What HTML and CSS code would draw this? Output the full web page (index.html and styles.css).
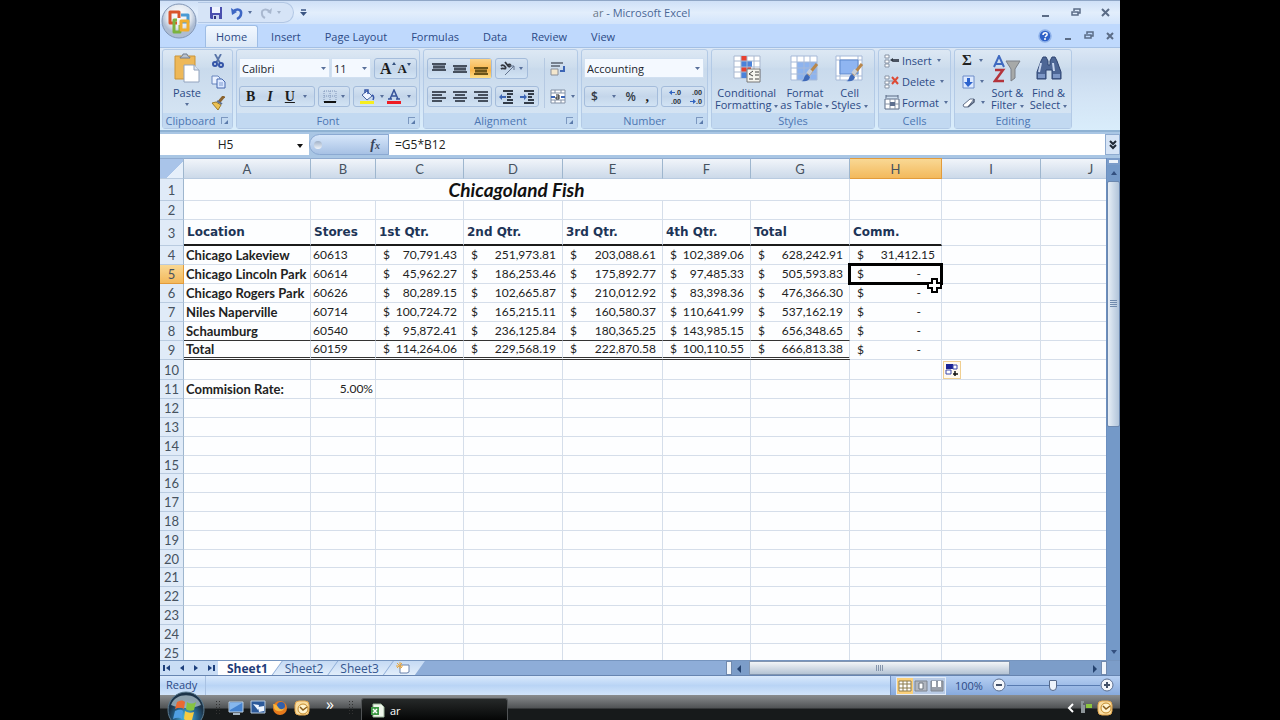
FILE: index.html
```html
<!DOCTYPE html>
<html lang="en">
<head>
    <meta charset="UTF-8">
    <meta name="viewport" content="width=device-width, initial-scale=1.0">
    <title>ar - Microsoft Excel</title>
    <link rel="stylesheet" href="styles.css">
</head>
<body>
<div class="app">
    <header class="titlebar">
        <button class="office" aria-label="Office Button">
            <svg width="36" height="36" viewBox="0 0 36 36">
                <defs><radialGradient id="orb" cx=".5" cy=".35"><stop offset="0" stop-color="#fff"/><stop offset=".7" stop-color="#e3e9f1"/><stop offset="1" stop-color="#aebdd3"/></radialGradient></defs>
                <circle cx="18" cy="18" r="17" fill="url(#orb)" stroke="#8296b5"/>
                <g fill="none" stroke-width="3" stroke-linejoin="round">
                    <path d="M16 20H9V9h9v6" stroke="#d9542b"/>
                    <path d="M20 12h7v7h-6" stroke="#4a9bd4"/>
                    <path d="M16 17h-3v12h6v-7" stroke="#7bb33e"/>
                    <path d="M20 18h7v9h-7z" stroke="#f0ae2e"/>
                </g>
            </svg>
        </button>
        <div class="quick">
            <button aria-label="Save"><svg width="14" height="14" viewBox="0 0 14 14"><path d="M1 1h12v12H2l-1-1z" fill="#4a4fae"/><path d="M3 1h8v6H3z" fill="#eef3ff"/><path d="M4 9h6v4H4z" fill="#c9d5ef"/><path d="M5 10h2v3H5z" fill="#30357c"/></svg></button>
            <button aria-label="Undo"><svg width="14" height="14" viewBox="0 0 14 14"><path d="M3 6c3-4 9-3 8 2 0 2-2 4-4 5" fill="none" stroke="#3d66c4" stroke-width="2.5"/><path d="M1 2l1 7 5-3z" fill="#3d66c4"/></svg><i class="caret"></i></button>
            <button aria-label="Redo"><svg width="14" height="14" viewBox="0 0 14 14"><path d="M11 6C8 2 2 3 3 8c0 2 1 3 3 4" fill="none" stroke="#a9b8cf" stroke-width="2"/><path d="M13 2l-1 6-4-2z" fill="#a9b8cf"/></svg><i class="caret pale"></i></button>
        </div>
        <button class="more" aria-label="Customize Quick Access Toolbar"><svg width="7" height="8" viewBox="0 0 7 8"><path d="M1 1h5" stroke="#3b5684" stroke-width="1.5"/><path d="M0 3h7L3.500 7z" fill="#3b5684"/></svg></button>
        <h1><span>ar</span> - Microsoft Excel</h1>
        <div class="winbtns">
            <button aria-label="Minimize"><svg width="10" height="10"><path d="M1 8h7" stroke="#5b6c86" stroke-width="2"/></svg></button>
            <button aria-label="Restore"><svg width="10" height="10"><path d="M3 3V1h6v4H7M1 4h6v3H1z" fill="none" stroke="#5b6c86" stroke-width="1.500"/></svg></button>
            <button aria-label="Close"><svg width="10" height="10"><path d="M1 1l7 7M8 1L1 8" stroke="#5b6c86" stroke-width="2"/></svg></button>
        </div>
    </header>

    <nav class="tabs">
        <button class="tab home">Home</button>
        <button class="tab">Insert</button>
        <button class="tab">Page Layout</button>
        <button class="tab">Formulas</button>
        <button class="tab">Data</button>
        <button class="tab">Review</button>
        <button class="tab">View</button>
        <div class="docbtns">
            <button aria-label="Help"><svg width="14" height="14" viewBox="0 0 14 14"><circle cx="7" cy="7" r="6" fill="#2f62c8" stroke="#8fb2ea" stroke-width="1.500"/><path d="M5 6c0-3 5-3 4 0L7 8M7 9v2" fill="none" stroke="#fff" stroke-width="1.500"/></svg></button>
            <button aria-label="Minimize Workbook"><svg width="10" height="10"><path d="M2 8h6" stroke="#5b6c86" stroke-width="2"/></svg></button>
            <button aria-label="Restore Workbook"><svg width="10" height="10"><path d="M3 3V1h6v4H7M1 4h6v3H1z" fill="none" stroke="#5b6c86" stroke-width="1.500"/></svg></button>
            <button aria-label="Close Workbook"><svg width="10" height="10"><path d="M2 2l6 6M8 2L2 8" stroke="#5b6c86" stroke-width="2"/></svg></button>
        </div>
    </nav>

    <section class="ribbon">
        <div class="group clipboard">
            <div class="tools">
                <button class="big"><svg width="28" height="30" viewBox="0 0 28 30"><path d="M2 3h20v23H2z" fill="#eeb858" stroke="#c99338"/><path d="M7 5c0-2 3-1 3-4h4c0 3 3 2 3 4z" fill="#b9c2cf" stroke="#717d8e"/><path d="M11 12h10l5 5v12H11z" fill="#fff" stroke="#93a4be"/><path d="M21 12v5h5" fill="#dbe5f3" stroke="#93a4be"/></svg>Paste<i class="caret"></i></button>
                <div class="stack">
                    <button aria-label="Cut"><svg width="14" height="14" viewBox="0 0 14 14"><path d="M4 0l5 9M10 0L5 9" stroke="#5874a8" stroke-width="1.800"/><g fill="none" stroke="#3555a8" stroke-width="2"><circle cx="4" cy="10" r="2"/><circle cx="10" cy="11" r="2"/></g></svg></button>
                    <button aria-label="Copy"><svg width="15" height="14" viewBox="0 0 15 14"><path d="M1 1h6l2 2v6H1z" fill="#e9f1ff" stroke="#6784bd"/><path d="M6 4h5l3 3v6H6z" fill="#dbe8ff" stroke="#4566ad"/><path d="M8 8h4M8 10h4" stroke="#7f9bd0"/></svg></button>
                    <button aria-label="Format Painter"><svg width="14" height="14" viewBox="0 0 14 14"><path d="M13 0L8 6" stroke="#8b6430" stroke-width="3"/><path d="M1 7l4-1 5 3-3 5z" fill="#ecc152" stroke="#9a7a2c"/><path d="M6 5l5 3" stroke="#5d6f8e" stroke-width="2"/></svg></button>
                </div>
            </div>
            <div class="caption">Clipboard<button class="launch" aria-label="Clipboard options"></button></div>
        </div>

        <div class="group font">
            <div class="tools lines">
                <div class="line">
                    <div class="combos">
                        <select class="face" aria-label="Font"><option>Calibri</option></select>
                        <select class="size" aria-label="Font size"><option>11</option></select>
                    </div>
                    <div class="set grow"><button class="serif up" aria-label="Grow font">A<i class="tri"></i></button><button class="serif down" aria-label="Shrink font">A<i class="tri flip"></i></button></div>
                </div>
                <div class="line">
                    <div class="set biu"><button class="serif">B</button><button class="serif"><em>I</em></button><button class="serif"><u>U</u></button><i class="caret"></i></div>
                    <div class="set"><button aria-label="Borders"><svg width="14" height="14" viewBox="0 0 14 14"><path d="M1 1h12v11M1 1v11M7 1v10M1 6h12" fill="none" stroke="#8096ba" stroke-dasharray="1 1"/><path d="M1 12h12" stroke="#111" stroke-width="2"/></svg></button><i class="caret"></i></div>
                    <div class="set grow">
                        <button aria-label="Fill color"><svg width="16" height="16" viewBox="0 0 16 16"><path d="M3 6l5-4 5 5-5 4z" fill="#eef4ff" stroke="#46639f"/><path d="M6 4V1h3v4M13 6c2 1 2 3 1 5" fill="none" stroke="#3555a8" stroke-width="1.500"/><path d="M1 12h14v3H1z" fill="#f7ee1f"/></svg></button><i class="caret"></i>
                        <button aria-label="Font color"><svg width="16" height="16" viewBox="0 0 16 16"><path d="M4 10l4-9 4 9M5 7h6M2 10h4M10 10h4" fill="none" stroke="#36539a" stroke-width="1.500"/><path d="M1 12h14v3H1z" fill="#ee1c24"/></svg></button><i class="caret"></i>
                    </div>
                </div>
            </div>
            <div class="caption">Font<button class="launch" aria-label="Font options"></button></div>
        </div>

        <div class="group alignment">
            <div class="tools">
                <div class="lines">
                    <div class="line">
                        <div class="set bars">
                            <button aria-label="Top align"><svg width="14" height="14"><path d="M0 1h14v2H0zM1 4h12v2H1zM0 7h14v2H0z" fill="#46505e"/><path d="M1 3h12v1H1zM1 6h12v1H1z" fill="#7f8b9b"/></svg></button>
                            <button aria-label="Middle align"><svg width="14" height="14"><path d="M0 3h14v2H0zM1 6h12v2H1zM0 9h14v2H0z" fill="#46505e"/><path d="M1 5h12v1H1zM1 8h12v1H1z" fill="#7f8b9b"/></svg></button>
                            <button class="on" aria-label="Bottom align"><svg width="14" height="14"><path d="M0 5h14v2H0zM1 8h12v2H1zM0 11h14v2H0z" fill="#6b5318"/><path d="M1 7h12v1H1zM1 10h12v1H1z" fill="#a58138"/></svg></button>
                        </div>
                        <div class="set"><button aria-label="Orientation"><svg width="15" height="15" viewBox="0 0 15 15"><path d="M1 5c2-2 4 0 5 2M1 8c2-2 3 1 5-1M5 1l4 5M9 6c3-1 1-4-1-2" fill="none" stroke="#33373f" stroke-width="1.800"/><path d="M5 14l9-9M14 5h-4M14 5v4" fill="none" stroke="#65758f"/></svg></button><i class="caret"></i></div>
                    </div>
                    <div class="line">
                        <div class="set bars">
                            <button aria-label="Align left"><svg width="14" height="14"><path d="M0 2h14M0 5h10M0 8h14M0 11h10" stroke="#46505e" stroke-width="2"/></svg></button>
                            <button aria-label="Center"><svg width="14" height="14"><path d="M0 2h14M2 5h10M0 8h14M2 11h10" stroke="#46505e" stroke-width="2"/></svg></button>
                            <button aria-label="Align right"><svg width="14" height="14"><path d="M0 2h14M4 5h10M0 8h14M4 11h10" stroke="#46505e" stroke-width="2"/></svg></button>
                        </div>
                        <div class="set bars">
                            <button aria-label="Decrease indent"><svg width="15" height="14"><path d="M4 1h10M8 4h6M8 7h4M8 10h6M4 13h10" stroke="#333c49" stroke-width="2"/><path d="M7 6H3V4L0 7l3 3V8h4z" fill="#3c65b5"/></svg></button>
                            <button aria-label="Increase indent"><svg width="15" height="14"><path d="M4 1h10M8 4h6M8 7h4M8 10h6M4 13h10" stroke="#333c49" stroke-width="2"/><path d="M0 6h4V4l3 3-3 3V8H0z" fill="#3c65b5"/></svg></button>
                        </div>
                    </div>
                </div>
                <div class="stack two">
                    <button aria-label="Wrap text"><svg width="16" height="16" viewBox="0 0 16 16"><path d="M1 2h12M1 5h9" stroke="#76808e" stroke-width="2"/><path d="M1 8h7v6H1z" fill="#f4e7cd" stroke="#8a8f99"/><path d="M10 10h4V5" fill="none" stroke="#3c65b5" stroke-width="2"/></svg></button>
                    <button aria-label="Merge and center"><svg width="16" height="16" viewBox="0 0 16 16"><path d="M1 1h14v13H1zM1 4h14M1 11h14M5 1v3M11 1v3M5 11v3M11 11v3" fill="#fff" stroke="#8290a5"/><path d="M1 8h4M11 8h4" stroke="#3c65b5" stroke-width="2"/><path d="M6 6h3v4H6V8h3" fill="none" stroke="#222"/></svg><i class="caret"></i></button>
                </div>
            </div>
            <div class="caption">Alignment<button class="launch" aria-label="Alignment options"></button></div>
        </div>

        <div class="group number">
            <div class="tools lines">
                <div class="line"><select class="format" aria-label="Number format"><option>Accounting</option></select></div>
                <div class="line">
                    <div class="set money"><button>$</button><i class="caret"></i><button>%</button><button class="serif">,</button></div>
                    <div class="set bars">
                        <button class="dec" aria-label="Increase decimal"><span><svg width="6" height="5"><path d="M6 2H3V0L0 2.500 3 5V3h3z" fill="#3264c0"/></svg>.0</span><span>.00</span></button>
                        <button class="dec" aria-label="Decrease decimal"><span>.00</span><span><svg width="6" height="5"><path d="M0 2h3V0l3 2.500L3 5V3H0z" fill="#3264c0"/></svg>.0</span></button>
                    </div>
                </div>
            </div>
            <div class="caption">Number<button class="launch" aria-label="Number options"></button></div>
        </div>

        <div class="group styles">
            <div class="tools">
                <button class="big"><svg width="28" height="28" viewBox="0 0 28 28"><path d="M1 1h26v22H1z" fill="#fff" stroke="#a9b8d0"/><path d="M8 1h6v5H8zM8 12h10v5H8z" fill="#e8402f"/><path d="M8 6h11v6H8zM8 17h6v6H8z" fill="#4b82da"/><path d="M1 6h26M1 12h26M1 17h26M8 1v22M14 1v22M21 1v22" stroke="#a9b8d0"/><path d="M14 14h13v13H14z" fill="#f5f5ef" stroke="#777"/><path d="M20 16l-4 3 4 2M22 17h4M22 20h4M16 24h4M22 24h4" fill="none" stroke="#444"/></svg><span>Conditional<br>Formatting<i class="caret"></i></span></button>
                <button class="big"><svg width="29" height="28" viewBox="0 0 29 28"><path d="M1 1h26v24H1z" fill="#fff"/><path d="M7 7h20v18H7z" fill="#8db3ee"/><path d="M1 1h26v24H1zM1 7h26M1 13h26M1 19h26M7 1v24M14 1v24M20 1v24" fill="none" stroke="#a6b9d8"/><path d="M27 9l-9 11" stroke="#b8874b" stroke-width="3"/><path d="M21 15l-3 4" stroke="#c9ced6" stroke-width="4"/><path d="M11 26c4 0 2-5 6-7l3 3c-1 4-4 5-9 4z" fill="#3f69b8"/></svg><span>Format<br>as Table<i class="caret"></i></span></button>
                <button class="big"><svg width="29" height="28" viewBox="0 0 29 28"><path d="M1 1h26v24H1z" fill="#fff" stroke="#a6b9d8"/><path d="M1 5h26M1 21h26M5 1v24M23 1v24" stroke="#a6b9d8"/><path d="M5 5h18v14H5z" fill="#8fb5f1" stroke="#5f89cd"/><path d="M27 9l-9 11" stroke="#b8874b" stroke-width="3"/><path d="M21 15l-3 4" stroke="#c9ced6" stroke-width="4"/><path d="M11 26c4 0 2-5 6-7l3 3c-1 4-4 5-9 4z" fill="#3f69b8"/></svg><span>Cell<br>Styles<i class="caret"></i></span></button>
            </div>
            <div class="caption">Styles</div>
        </div>

        <div class="group cells">
            <div class="tools">
                <div class="stack">
                    <button><svg width="16" height="14" viewBox="0 0 16 14"><path d="M1 1h4v3H1zM1 6h4v3H1zM1 10h4v3H1z" fill="#fff" stroke="#8793a5"/><path d="M9 5h6v3H9z" fill="#4a5362"/><path d="M6 6l3-2v4z" fill="#303844"/></svg>Insert<i class="caret"></i></button>
                    <button><svg width="16" height="14" viewBox="0 0 16 14"><path d="M1 1h4v3H1zM1 6h4v3H1zM1 10h4v3H1zM5 6h4" fill="#fff" stroke="#8793a5"/><path d="M8 2l6 7M14 2L8 9" stroke="#dd4a35" stroke-width="2"/></svg>Delete<i class="caret"></i></button>
                    <button><svg width="16" height="15" viewBox="0 0 16 15"><path d="M1 4h14v10H1z" fill="#fff" stroke="#5a6a85"/><path d="M6 4v10M11 4v10M1 9h14" stroke="#8793a5"/><path d="M6 7h5v4H6z" fill="#5e6f8e"/><path d="M2 1h12M2 0v3M14 0v3" stroke="#5a6a85"/></svg>Format<i class="caret"></i></button>
                </div>
            </div>
            <div class="caption">Cells</div>
        </div>

        <div class="group editing">
            <div class="tools">
                <div class="stack">
                    <button class="serif">Σ<i class="caret"></i></button>
                    <button aria-label="Fill"><svg width="13" height="14" viewBox="0 0 13 14"><path d="M1 1h11v12H1z" fill="#dce9ff" stroke="#6c8cc8"/><path d="M5 3h3v4h3l-5 5-4-5h3z" fill="#2c63cd"/></svg><i class="caret"></i></button>
                    <button aria-label="Clear"><svg width="14" height="12" viewBox="0 0 14 12"><path d="M1 8l7-6h4L6 10H2z" fill="#fff" stroke="#63718a"/><path d="M6 10l6-5V2" fill="none" stroke="#4c5a73" stroke-width="1.500"/></svg><i class="caret"></i></button>
                </div>
                <button class="big"><svg width="28" height="28" viewBox="0 0 28 28"><path d="M13 6h14l-5 8v9l-4 3V14z" fill="#a7a9a8" stroke="#7c8087"/><path d="M1 12L6 1l5 11M3 9h7" fill="none" stroke="#3f6ac0" stroke-width="2"/><path d="M2 15h8L2 26h9" fill="none" stroke="#b3343c" stroke-width="2.500"/></svg><span>Sort &amp;<br>Filter<i class="caret"></i></span></button>
                <button class="big"><svg width="28" height="28" viewBox="0 0 28 28"><path d="M6 6l2-4h3l2 4v4h2V6l2-4h3l2 4 4 11v7h-9v-9h-6v9H2v-7z" fill="#4d6695" stroke="#2f4472"/><path d="M6 8l-2 9M18 8l1 8" stroke="#c5d4ee" stroke-width="2"/><path d="M3 19h7v4H3zM18 19h7v4h-7z" fill="#7d97c6"/></svg><span>Find &amp;<br>Select<i class="caret"></i></span></button>
            </div>
            <div class="caption">Editing</div>
        </div>
    </section>

    <div class="formulabar">
        <input class="namebox" value="H5" aria-label="Name box">
        <button class="namedrop" aria-label="Names"><i class="caret big-caret"></i></button>
        <button class="fx" aria-label="Insert function"><i class="knob"></i><em>f<sub>x</sub></em></button>
        <input class="formula" value="=G5*B12" aria-label="Formula">
        <button class="expand" aria-label="Expand formula bar"><svg width="8" height="10"><path d="M1 1l3 3 3-3M1 5l3 3 3-3" fill="none" stroke="#1d2735" stroke-width="2"/></svg></button>
    </div>

    <main class="work">
        <div class="grid">
            <table class="sheet">
                <colgroup><col class="w-head"><col class="w-a"><col class="w-b"><col class="w-c"><col class="w-d"><col class="w-e"><col class="w-f"><col class="w-g"><col class="w-h"><col class="w-i"><col class="w-j"></colgroup>
                <thead>
                    <tr><th class="corner"></th><th>A</th><th>B</th><th>C</th><th>D</th><th>E</th><th>F</th><th>G</th><th class="sel">H</th><th>I</th><th class="cut">J</th></tr>
                </thead>
                <tbody id="rows">
                    <tr class="r1"><th>1</th><td colspan="7" class="title">Chicagoland Fish</td><td></td><td></td><td></td></tr>
                    <tr><th>2</th><td></td><td></td><td></td><td></td><td></td><td></td><td></td><td></td><td></td><td></td></tr>
                    <tr class="r3"><th>3</th><td>Location</td><td>Stores</td><td>1st Qtr.</td><td>2nd Qtr.</td><td>3rd Qtr.</td><td>4th Qtr.</td><td>Total</td><td>Comm.</td><td></td><td></td></tr>
                </tbody>
            </table>
        </div>
        <div class="vscroll">
            <i class="split"></i>
            <button class="arrow" aria-label="Scroll up"><i class="tri"></i></button>
            <div class="vthumb"><i></i></div>
            <button class="arrow bottom" aria-label="Scroll down"><i class="tri flip"></i></button>
        </div>
    </main>

    <div class="sheetbar">
        <div class="sheetnav">
            <button aria-label="First sheet"><svg width="8" height="8"><path d="M1 1v6" stroke="#1c3f7c" stroke-width="2"/><path d="M7 1v6L3 4z" fill="#1c3f7c"/></svg></button>
            <button aria-label="Previous sheet"><svg width="8" height="8"><path d="M6 1v6L2 4z" fill="#1c3f7c"/></svg></button>
            <button aria-label="Next sheet"><svg width="8" height="8"><path d="M2 1v6l4-3z" fill="#1c3f7c"/></svg></button>
            <button aria-label="Last sheet"><svg width="8" height="8"><path d="M7 1v6" stroke="#1c3f7c" stroke-width="2"/><path d="M1 1v6l4-3z" fill="#1c3f7c"/></svg></button>
        </div>
        <button class="sheettab current">Sheet1</button>
        <button class="sheettab">Sheet2</button>
        <button class="sheettab">Sheet3</button>
        <button class="sheettab new" aria-label="Insert worksheet"><svg width="15" height="12" viewBox="0 0 15 12"><path d="M4 3h9v7l-2 1H4z" fill="#fff" stroke="#6b83ad"/><path d="M4 0v7M0 4h7M1 1l5 5M6 1L1 6" stroke="#e9a63c"/></svg></button>
        <div class="hscroll">
            <i class="split"></i>
            <button class="arrow" aria-label="Scroll left"><svg width="6" height="8"><path d="M5 0v8L1 4z" fill="#24426f"/></svg></button>
            <div class="htrack"><div class="hthumb"><i></i></div></div>
            <button class="arrow" aria-label="Scroll right"><svg width="6" height="8"><path d="M1 0v8l4-4z" fill="#24426f"/></svg></button>
            <i class="split"></i>
        </div>
    </div>

    <div class="status">
        <span class="ready">Ready</span>
        <div class="views">
            <div class="viewset">
                <button class="on" aria-label="Normal"><svg width="14" height="12"><path d="M1 1h12v10H1zM1 4h12M1 8h12M5 1v10M9 1v10" fill="#fff" stroke="#8a7a4c"/></svg></button>
                <button aria-label="Page layout"><svg width="14" height="12"><path d="M1 1h12v10H1z" fill="#b1b6bf" stroke="#7e858f"/><path d="M5 3h4v6H5z" fill="#fff" stroke="#6b727c"/></svg></button>
                <button aria-label="Page break preview"><svg width="14" height="12"><path d="M1 1h12v10H1z" fill="#999fa9" stroke="#7e858f"/><path d="M2 1h4v6H2zM8 1h3v6H8z" fill="#fff"/></svg></button>
            </div>
            <button class="percent">100%</button>
            <button aria-label="Zoom out"><svg width="15" height="15"><circle cx="7" cy="7" r="6" fill="#f3f6fb" stroke="#5c6f90"/><path d="M4 7h6" stroke="#45536b" stroke-width="2"/></svg></button>
            <input type="range" min="0" max="100" value="50" aria-label="Zoom">
            <button aria-label="Zoom in"><svg width="15" height="15"><circle cx="7" cy="7" r="6" fill="#f3f6fb" stroke="#5c6f90"/><path d="M4 7h6M7 4v6" stroke="#45536b" stroke-width="2"/></svg></button>
        </div>
    </div>

    <footer class="taskbar">
        <button class="start" aria-label="Start"><svg width="38" height="38" viewBox="0 0 38 38">
            <defs><radialGradient id="vista" cx=".5" cy=".7"><stop offset="0" stop-color="#52c3e8"/><stop offset=".6" stop-color="#27658f"/><stop offset="1" stop-color="#1c3348"/></radialGradient></defs>
            <circle cx="19" cy="19" r="18" fill="url(#vista)" stroke="#5d7d92"/>
            <path d="M4 14C8 1 30 1 34 14c-8 4-22 4-30 0z" fill="#d5e7ef" opacity=".6"/>
            <path d="M10 11c3-2 6-2 8 0l-1 7c-3-2-6-1-9 0z" fill="#ea6a32"/><path d="M20 11c3 2 6 2 9 0l-2 8c-3 1-6 1-8-1z" fill="#85c341"/>
            <path d="M8 20c3-1 6-2 8 0l-1 8c-3-2-6-1-9 0z" fill="#4f9fe3"/><path d="M18 20c3 2 6 2 9 1l-2 8c-3 1-6 1-8-1z" fill="#f8cb40"/>
        </svg></button>
        <i class="grip"></i>
        <button aria-label="Show desktop"><svg width="16" height="15"><path d="M1 2h14v10H1z" fill="#4482cf" stroke="#bdd0e2"/><path d="M2 3h12L2 10z" fill="#86b7ed"/><path d="M5 14h7" stroke="#a7b6c4" stroke-width="2"/></svg></button>
        <button aria-label="Switch windows"><svg width="16" height="15"><path d="M1 1h14v12H1z" fill="#2c5999" stroke="#b7cbe0"/><path d="M3 4l6 1-1 5zM8 7l6-1v5l-5 1z" fill="#eef5ff"/></svg></button>
        <button aria-label="Firefox"><svg width="16" height="16"><circle cx="8" cy="8" r="7" fill="#e77a1c"/><circle cx="9" cy="6" r="4" fill="#3260ac"/><path d="M1 4c2 0 4 1 5 3 2 3 5 3 7 0-1 5-9 6-11 1z" fill="#f6b53c"/></svg></button>
        <button aria-label="Outlook"><svg width="16" height="16"><rect x="1" y="1" width="14" height="14" rx="4" fill="#f8dca0" stroke="#e3a64c"/><circle cx="9" cy="9" r="5" fill="#fff3cf" stroke="#c48a2a"/><path d="M6 7l3 3 4-3" fill="none" stroke="#8a5d1b" stroke-width="1.500"/></svg></button>
        <span class="chev">»</span>
        <i class="grip"></i>
        <button class="task"><svg width="15" height="15"><path d="M3 1h8l3 3v10H3z" fill="#eef6ea" stroke="#9db69b"/><path d="M1 4h8v8H1z" fill="#3f9a45"/><path d="M3 6l4 4M7 6l-4 4" stroke="#fff" stroke-width="1.500"/></svg>ar</button>
        <div class="tray">
            <button aria-label="Show hidden icons"><svg width="8" height="10"><path d="M6 1L2 5l4 4" fill="none" stroke="#fff" stroke-width="2"/></svg></button>
            <svg width="14" height="15"><path d="M3 3v10M2 2h3M5 5v8" stroke="#8d9599" stroke-width="2"/><path d="M7 4h6v4H7z" fill="#8bc53f"/></svg>
            <svg width="16" height="16"><rect x="1" y="1" width="14" height="14" rx="4" fill="#f8dca0" stroke="#e3a64c"/><circle cx="9" cy="8" r="5" fill="#fff3cf" stroke="#c48a2a"/><path d="M6 6l3 3 4-3" fill="none" stroke="#8a5d1b" stroke-width="1.500"/></svg>
        </div>
    </footer>
</div>

<script>
    var data = [
        ['Chicago Lakeview', '60613', '70,791.43', '251,973.81', '203,088.61', '102,389.06', '628,242.91', '31,412.15'],
        ['Chicago Lincoln Park', '60614', '45,962.27', '186,253.46', '175,892.77', '97,485.33', '505,593.83', '-'],
        ['Chicago Rogers Park', '60626', '80,289.15', '102,665.87', '210,012.92', '83,398.36', '476,366.30', '-'],
        ['Niles Naperville', '60714', '100,724.72', '165,215.11', '160,580.37', '110,641.99', '537,162.19', '-'],
        ['Schaumburg', '60540', '95,872.41', '236,125.84', '180,365.25', '143,985.15', '656,348.65', '-'],
        ['Total', '60159', '114,264.06', '229,568.19', '222,870.58', '100,110.55', '666,813.38', '-']
    ];
    var plus = '<svg class="pointer" width="16" height="16"><path d="M5 1h5v4h4v5h-4v4H5v-4H1V5h4z" fill="#fff" stroke="#000" stroke-width="2"/></svg>';
    var fill = '<button class="autofill" aria-label="Auto Fill Options"><svg width="14" height="14"><path d="M1 1h7v5H1z" fill="#1b2394"/><path d="M8 2h4v4H8zM1 7h5v4H1z" fill="#fff" stroke="#3a46a8"/><path d="M10 8v5M8 11h5" stroke="#111" stroke-width="1.500"/></svg></button>';
    var html = '';

    for (var n = 4; n <= 25; n++) {
        var row = data[n - 4];
        html += '<tr class="r' + n + '"><th' + (n === 5 ? ' class="sel"' : '') + '>' + n + '</th>';
        for (var c = 0; c < 10; c++) {
            if (row && c === 0) {
                html += '<td class="name">' + row[0] + '</td>';
            } else if (row && c === 1) {
                html += '<td>' + row[1] + '</td>';
            } else if (row && c < 8) {
                var active = n === 5 && c === 7;
                html += '<td' + (active ? ' class="active"' : '') + '><div class="acct' + (row[c] === '-' ? ' zero' : '') + '"><span>$</span><span>' + row[c] + '</span></div>' + (active ? plus : '') + '</td>';
            } else if (n === 10 && c === 8) {
                html += '<td>' + fill + '</td>';
            } else if (n === 11 && c === 0) {
                html += '<td class="name">Commision Rate:</td>';
            } else if (n === 11 && c === 1) {
                html += '<td class="rate">5.00%</td>';
            } else {
                html += '<td></td>';
            }
        }
        html += '</tr>';
    }
    document.getElementById('rows').insertAdjacentHTML('beforeend', html);
</script>
</body>
</html>
```
FILE: styles.css
```css
* {
    box-sizing: border-box;
}

body {
    margin: 0;
    background: #000;
    font-family: "Open Sans", "Noto Sans", sans-serif;
    font-size: 11px;
    color: #2c4a86;
}

button,
input,
select {
    font: inherit;
    color: inherit;
    margin: 0;
    padding: 0;
    border: 0;
    background: none;
}

svg {
    display: block;
    flex: none;
}

.app {
    display: flex;
    flex-direction: column;
    width: 75%;
    height: 100vh;
    margin: 0 auto;
    overflow: hidden;
    background: #bfdbff;
}

.caret {
    display: inline-block;
    flex: none;
    margin-left: 4px;
    vertical-align: middle;
    border: 2px solid transparent;
    border-top: 3px solid #58709b;
    border-bottom: 0;
}

.caret.pale {
    border-top-color: #a5b4ca;
}

.tri {
    display: block;
    border: 3px solid transparent;
    border-bottom: 4px solid #33507f;
    border-top: 0;
}

.tri.flip {
    transform: rotate(180deg);
}

/* title bar */
.titlebar {
    display: flex;
    align-items: center;
    height: 24px;
    flex: none;
    background: linear-gradient(#cfe0f7, #e2eefc 50%, #d2e4fb);
    border-top: 1px solid #8fa6c6;
}

.office {
    align-self: flex-start;
    width: 37px;
    height: 36px;
    margin: 2px 0 0 1px;
    z-index: 2;
}

.quick {
    display: flex;
    align-items: center;
    gap: 7px;
    height: 21px;
    width: 96px;
    padding-left: 11px;
    border: 1px solid #b2c7e4;
    border-left: 0;
    border-radius: 0 11px 11px 0;
    background: #d6e4f7;
}

.quick button {
    display: flex;
    align-items: center;
}

.more {
    margin-left: 6px;
}

.titlebar h1 {
    flex: 1;
    margin: 0 0 0 54px;
    text-align: center;
    font-size: 11px;
    font-weight: 400;
    color: #4a6796;
}

.titlebar h1 span {
    color: #6d7988;
}

.winbtns {
    display: flex;
    gap: 20px;
    margin-right: 9px;
    margin-left: 119px;
}

/* tabs */
.tabs {
    display: flex;
    align-items: flex-end;
    height: 23px;
    flex: none;
    padding-left: 45px;
    background: #bfd9fd;
}

.tab {
    height: 22px;
    padding: 0 12px;
}

.tab.home {
    padding: 0 10px;
    margin-right: 1px;
    border: 1px solid #9ebde5;
    border-bottom: 0;
    border-radius: 3px 3px 0 0;
    background: linear-gradient(#f2f8ff, #dbe8f7);
}

.docbtns {
    display: flex;
    align-items: center;
    align-self: center;
    gap: 11px;
    margin-left: auto;
    margin-right: 5px;
}

/* ribbon */
.ribbon {
    display: flex;
    gap: 3px;
    flex: none;
    padding: 1px 2px;
    height: 85px;
    border-top: 1px solid #a4c0e4;
    background: linear-gradient(#dbe7f5, #c9daee 25%, #d3e4f5 60%, #d9edfb);
    border-bottom: 2px solid #8fb2d3;
}

.group {
    display: flex;
    flex-direction: column;
    border: 1px solid #b3cae6;
    border-radius: 3px;
    background: linear-gradient(#dde8f4, #cddded 22%, #c9daec 24%, #d8e7f5);
}

.clipboard { width: 71px; }
.font { width: 184px; }
.alignment { width: 155px; }
.number { width: 127px; }
.styles { width: 164px; }
.cells { width: 73px; }
.editing { width: 118px; }

.tools {
    display: flex;
    flex: 1;
    min-height: 0;
    padding: 0 2px;
}

.caption {
    position: relative;
    flex: none;
    height: 15px;
    line-height: 15px;
    text-align: center;
    color: #4c76b3;
    background: #c2d9f1;
}

.clipboard .caption {
    padding-right: 14px;
}

.launch {
    position: absolute;
    right: 4px;
    top: 4px;
    width: 7px;
    height: 7px;
    border-left: 1px solid #7c98c0;
    border-top: 1px solid #7c98c0;
}

.launch::after {
    content: "";
    position: absolute;
    right: 0;
    bottom: 0;
    border: 2px solid transparent;
    border-right-color: #5b7bab;
    border-bottom-color: #5b7bab;
}

.big {
    display: flex;
    flex-direction: column;
    align-items: center;
    gap: 4px;
    padding-top: 5px;
    line-height: 12px;
    white-space: nowrap;
}

.big .caret {
    margin-left: 3px;
}

.clipboard .big {
    width: 44px;
    padding-top: 3px;
}

.clipboard .big .caret {
    margin: 0;
}

.styles .tools {
    justify-content: space-between;
    padding: 0 6px 0 3px;
}

.stack {
    display: flex;
    flex-direction: column;
}

.stack button {
    display: flex;
    align-items: center;
    gap: 2px;
    height: 21px;
}

.stack .caret {
    margin-left: 3px;
}

.clipboard .stack {
    margin-left: 2px;
}

.stack.two {
    gap: 7px;
    margin-left: 3px;
    margin-top: 8px;
    padding: 0 0 0 5px;
    border-left: 1px solid #b5c9e2;
    height: 50px;
}

.cells .tools {
    padding-left: 5px;
}

.editing .tools {
    gap: 6px;
    padding-left: 7px;
}

.editing .stack .serif {
    font-size: 15px;
    color: #222;
    gap: 4px;
}

.lines {
    display: flex;
    flex-direction: column;
    gap: 7px;
    padding: 8px 2px 0;
}

.tools > .lines {
    padding-left: 1px;
}

.line {
    display: flex;
    gap: 3px;
    height: 21px;
}

.combos {
    display: flex;
    gap: 1px;
    width: 132px;
}

select {
    appearance: none;
    height: 20px;
    padding: 0 2px;
    border: 1px solid #d1e0f1;
    color: #20252d;
    background: #f4f9ff url("data:image/svg+xml,%3Csvg xmlns='http://www.w3.org/2000/svg' width='5' height='3'%3E%3Cpath d='M0 0h5L2.5 3z' fill='%2358709b'/%3E%3C/svg%3E") no-repeat right 3px center;
}

.face { width: 91px; }
.size { width: 40px; }

.format {
    width: 120px;
}

.set {
    display: flex;
    align-items: center;
    padding: 0 4px;
    border: 1px solid #a4bcdb;
    border-radius: 3px;
    background: linear-gradient(#d5e3f2, #c4d6ea 50%, #d2e3f4);
}

.set.grow {
    flex: 1;
    justify-content: space-around;
}

.set.bars {
    padding: 0;
}

.set.bars button {
    display: flex;
    align-items: center;
    justify-content: center;
    width: 21px;
    height: 19px;
}

.set .on {
    background: linear-gradient(#fbd48b, #f8b54b 60%, #fddf8a);
}

.serif {
    font-family: "Liberation Serif", serif;
    font-weight: 700;
    font-size: 14px;
    color: #1c1c1c;
}

.up,
.down {
    display: flex;
    align-items: baseline;
}

.up {
    font-size: 16px;
}

.down {
    font-size: 13px;
}

.down .tri,
.up .tri {
    align-self: flex-start;
    border-width: 2px;
    border-top: 0;
    height: 0;
    margin-top: 2px;
    border-bottom-width: 3px;
}

.biu {
    width: 76px;
    gap: 12px;
    padding: 0 4px 0 6px;
}

.biu .caret {
    margin-left: -4px;
}

.money {
    width: 76px;
    justify-content: space-between;
    padding: 0 8px 0 6px;
    color: #333b46;
    font-size: 12px;
}

.money button {
    font-weight: 600;
}

.set.bars .dec {
    flex-direction: column;
    align-items: flex-end;
    padding-right: 2px;
    font-size: 7px;
    font-weight: 700;
    line-height: 9px;
    color: #333b46;
}

.dec span {
    display: flex;
    align-items: center;
    height: 9px;
}

/* formula bar */
.formulabar {
    display: flex;
    align-items: stretch;
    flex: none;
    height: 26px;
    padding: 2px 0 3px;
    background: #a9c6e4;
}

.formulabar input {
    background: #fff;
    color: #222;
    font-size: 12px;
}

.namebox {
    width: 131px;
    text-align: center;
}

.namedrop {
    width: 18px;
    background: #fff;
}

.big-caret {
    border-width: 3px;
    border-top: 4px solid #111;
    margin-left: 0;
}

.fx {
    display: flex;
    align-items: center;
    justify-content: space-between;
    width: 80px;
    padding: 0 8px 0 4px;
    border: 1px solid #8ba9d2;
    border-radius: 11px 0 0 11px;
    background: linear-gradient(#d6e6fa, #a7c1e4);
}

.fx em {
    font: italic 700 14px "Liberation Serif", serif;
    color: #38455c;
}

.fx sub {
    font-size: 10px;
    vertical-align: baseline;
}

.knob {
    width: 8px;
    height: 8px;
    border-radius: 50%;
    background: linear-gradient(#9fb0c7, #f1f5fa);
}

.formula {
    flex: 1;
    min-width: 0;
    padding-left: 6px;
}

.expand {
    width: 15px;
    padding-left: 3px;
    border: 1px solid #8fabd0;
    background: #d6e4f6;
}

/* worksheet */
.work {
    display: flex;
    flex: 1;
    min-height: 0;
}

.grid {
    flex: 1;
    min-width: 0;
    overflow: hidden;
    background: #fdfeff;
}

.sheet {
    width: 100%;
    table-layout: fixed;
    border-collapse: separate;
    border-spacing: 0;
    font-family: Lato, "Open Sans", sans-serif;
    font-size: 12px;
    line-height: 14px;
    color: #222;
}

.w-head { width: 24px; }
.w-a { width: 127px; }
.w-b { width: 65px; }
.w-c { width: 88px; }
.w-d { width: 99px; }
.w-e { width: 100px; }
.w-f { width: 88px; }
.w-g { width: 99px; }
.w-h { width: 92px; }
.w-i { width: 99px; }

.sheet tr {
    height: 19px;
}

.sheet .r15,
.sheet .r20 {
    height: 18px;
}

.sheet th {
    padding: 0;
    font-size: 13px;
    font-weight: 400;
    color: #46525f;
    background: #e0ebf8;
    border-right: 1px solid #9eb6ce;
    border-bottom: 1px solid #b9cbe0;
}

.sheet thead th {
    height: 21px;
    background: linear-gradient(#f1f5fa, #ccd9e9);
    border-top: 1px solid #8fabd0;
}

.sheet thead .corner {
    background: linear-gradient(135deg, #a9c4e9 60%, #e6effa 60%);
}

.sheet thead .sel,
.sheet th.sel {
    background: linear-gradient(#f9d894, #f3b95c);
    border-color: #e29b3b;
}

.sheet thead .cut {
    padding-left: 34px;
    border-right: 0;
}

.sheet td {
    padding: 0 2px;
    white-space: nowrap;
    border-right: 1px solid #d5deea;
    border-bottom: 1px solid #d5deea;
}

.sheet td:last-child {
    border-right: 0;
}

.sheet .r1 {
    height: 22px;
}

.sheet .r1 .title {
    text-align: center;
    font-size: 19px;
    font-weight: 700;
    font-style: italic;
    line-height: 20px;
    color: #111;
}

.sheet .r3 {
    height: 26px;
}

.sheet .r3 td {
    padding-left: 3px;
    font-family: "DejaVu Sans", sans-serif;
    font-size: 12px;
    font-weight: 700;
    color: #1d3557;
}

.r3 td:nth-child(-n+9) {
    border-bottom: 2px solid #1b1b1b;
}

.r8 td:nth-child(-n+8) {
    border-bottom: 1px solid #333;
}

.r9 td:nth-child(-n+8) {
    border-bottom: 3px double #333;
}

.sheet .r10 {
    height: 20px;
}

.name {
    font-size: 13px;
    font-weight: 700;
}

.rate {
    text-align: right;
}

.acct {
    display: flex;
    justify-content: space-between;
    padding: 0 4px 0 5px;
}

.acct.zero {
    padding-right: 18px;
}

.active {
    position: relative;
}

.active::after {
    content: "";
    position: absolute;
    inset: -2px;
    border: 3px solid #000;
}

.pointer {
    position: absolute;
    right: -2px;
    bottom: -11px;
    z-index: 2;
}

.r10 td {
    position: relative;
}

.autofill {
    position: absolute;
    left: 1px;
    top: 1px;
    width: 18px;
    height: 18px;
    padding: 1px;
    border: 1px solid #f0cf91;
    background: #fffaf0;
}

.vscroll {
    display: flex;
    flex-direction: column;
    width: 14px;
    border-left: 1px solid #6b8fc0;
    background: #7499c8;
}

.vscroll .split {
    height: 7px;
    background: #eef4fb;
    border: 2px solid #7b9cc9;
}

.arrow {
    display: flex;
    align-items: center;
    justify-content: center;
    flex: none;
    width: 13px;
    height: 16px;
}

.vthumb {
    display: flex;
    align-items: center;
    justify-content: center;
    height: 49%;
    border: 1px solid #6b87ae;
    border-radius: 2px;
    background: linear-gradient(90deg, #e6eef6, #b1c4da);
}

.vthumb i {
    width: 7px;
    height: 7px;
    background: repeating-linear-gradient(#718bad 0 1px, transparent 1px 2px);
}

.bottom {
    margin-top: auto;
}

/* sheet tabs */
.sheetbar {
    display: flex;
    flex: none;
    height: 15px;
    background: #8eadd8;
    border-top: 1px solid #7695bf;
}

.sheetnav {
    display: flex;
    align-items: center;
    justify-content: space-around;
    width: 58px;
    background: #c9ddf5;
}

.sheettab {
    padding: 0 14px 0 12px;
    margin-left: -9px;
    font-size: 12px;
    line-height: 13px;
    color: #34568f;
    background: linear-gradient(#c5daf4, #e1edfa);
    clip-path: polygon(10px 0, 100% 0, calc(100% - 10px) 100%, 0 100%);
}

.sheettab.current {
    margin-left: 0;
    padding: 0 14px 0 9px;
    font-weight: 700;
    color: #1f3d7a;
    background: #fff;
    clip-path: polygon(0 0, 100% 0, calc(100% - 10px) 100%, 0 100%);
}

.hscroll {
    display: flex;
    width: 41%;
    margin-left: auto;
    padding-right: 13px;
    background: #7c9dc9;
}

.hscroll .split {
    width: 6px;
    background: #f2f6fb;
    border: 1px solid #7089ad;
}

.htrack {
    flex: 1;
    margin-left: 4px;
}

.hthumb {
    display: flex;
    align-items: center;
    justify-content: center;
    width: 77%;
    height: 14px;
    border: 1px solid #8195b0;
    background: linear-gradient(#f2f5f7, #b4c3d4);
}

.hthumb i {
    width: 7px;
    height: 6px;
    background: repeating-linear-gradient(90deg, #8495ab 0 1px, transparent 1px 2px);
}

/* status bar */
.status {
    display: flex;
    align-items: stretch;
    flex: none;
    height: 20px;
    background: linear-gradient(#d9e9fc, #b9d4f5 50%, #d2e5fb);
    border-top: 1px solid #6785b1;
}

.ready {
    padding: 0 8px 0 6px;
    line-height: 18px;
    border-right: 1px solid #a9c2e3;
}

.views {
    display: flex;
    align-items: center;
    width: 230px;
    margin-left: auto;
    padding: 0 5px;
    border-left: 1px solid #7391bf;
    background: linear-gradient(#b6cff2, #87aadd);
}

.viewset {
    display: flex;
    border: 1px solid #e1ebf8;
    background: #b9cbe5;
}

.viewset button {
    padding: 2px 1px;
}

.viewset .on {
    background: #fbd07a;
}

.percent {
    margin: 0 9px;
}

input[type="range"] {
    appearance: none;
    flex: 1;
    min-width: 0;
    height: 14px;
    background: linear-gradient(#587bb1, #587bb1) center / 100% 1px no-repeat;
}

input[type="range"]::-webkit-slider-thumb {
    appearance: none;
    width: 8px;
    height: 11px;
    border: 1px solid #56698a;
    border-radius: 1px 1px 4px 4px;
    background: #edf3fb;
}

/* windows taskbar */
.taskbar {
    display: flex;
    align-items: center;
    gap: 6px;
    flex: none;
    height: 25px;
    background: linear-gradient(#8a8d8f, #525557 50%, #171a1b 58%, #171a1b);
    color: #fff;
}

.start {
    align-self: flex-start;
    margin: -4px 4px 0 7px;
}

.grip {
    width: 7px;
    height: 16px;
    background: radial-gradient(#333 1px, transparent 1px) 0 0 / 3px 3px;
}

.chev {
    margin: -8px 8px 0 10px;
    font-size: 16px;
    line-height: 16px;
}

.task {
    display: flex;
    align-items: center;
    align-self: flex-end;
    gap: 5px;
    width: 147px;
    height: 22px;
    padding: 2px 0 0 8px;
    border: 1px solid #505355;
    border-bottom: 0;
    border-radius: 3px 3px 0 0;
    background: linear-gradient(#262929, #050606);
}

.tray {
    display: flex;
    align-items: center;
    gap: 4px;
    margin-left: auto;
    padding-right: 7px;
}
```
